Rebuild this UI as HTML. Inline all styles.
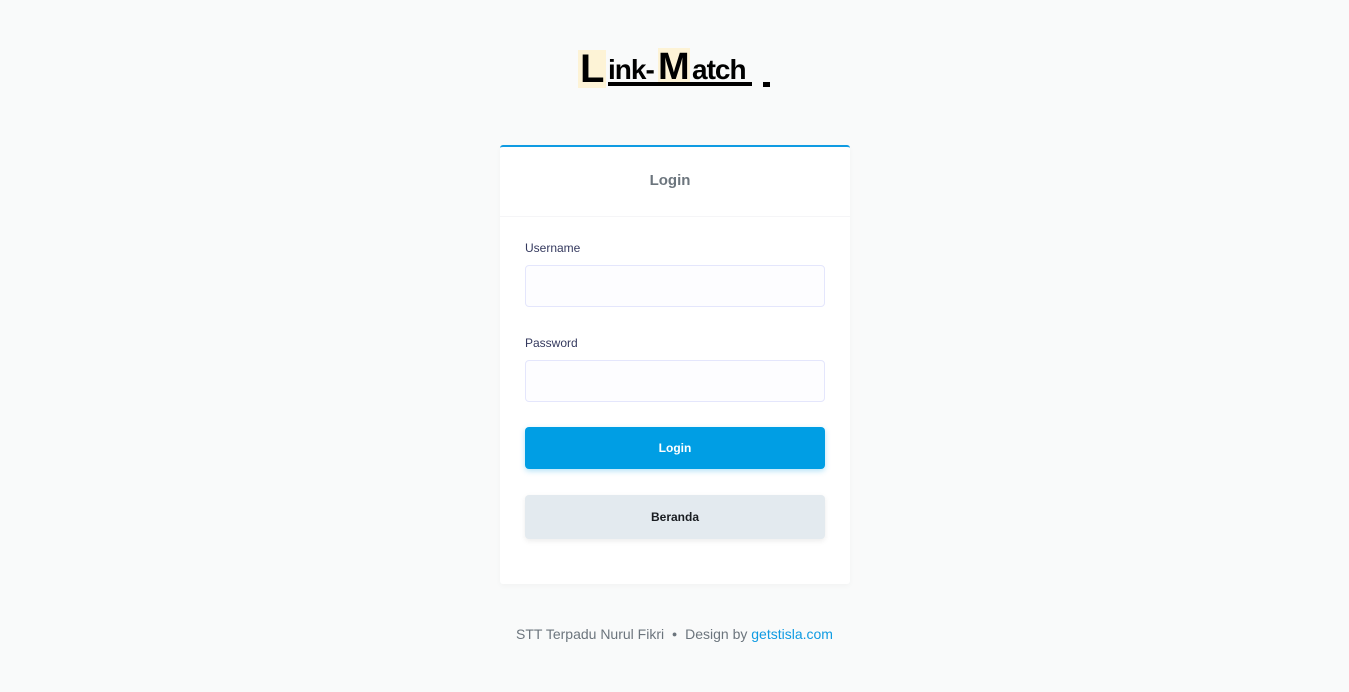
<!DOCTYPE html>
<html><head><style>
body{margin:0;background:#f9fafa;font-family:"Liberation Sans",sans-serif;width:1349px;height:692px;position:relative;overflow:hidden}
.logo{position:absolute;left:578px;top:46px;width:200px;height:50px}
.logo span{position:absolute;font-family:"Liberation Sans",sans-serif;font-weight:bold;color:#000}
.card{position:absolute;left:500px;top:145px;width:350px;height:437px;background:#fff;border-top:2px solid #0f9be2;border-radius:3px;box-shadow:0 2px 6px rgba(0,0,0,.03)}
.hd{height:69px;border-bottom:1px solid #f5f5f7;text-align:center;line-height:68px;font-size:15px;font-weight:bold;color:#6c757d;padding-right:10px}
label{position:absolute;left:25px;font-size:12px;color:#34395e}
.in{position:absolute;left:25px;width:298px;height:40px;border:1px solid #e4e6fc;background:#fdfdff;border-radius:4px}
.btn{position:absolute;left:25px;width:300px;border-radius:4px;text-align:center;font-size:12px;font-weight:bold}
.ft{position:absolute;top:626px;left:0;width:1349px;text-align:center;font-size:14px;color:#6c757d}
</style></head><body>
<div class="logo">
<span style="left:0;top:4px;font-size:40px;background:#fdf3d6;line-height:38px;padding:0 2px">L</span>
<span style="left:30px;top:10px;font-size:28px;line-height:28px;letter-spacing:-1px">ink-</span>
<span style="left:80px;top:2px;font-size:38px;line-height:38px;background:#fdf3d6">M</span>
<span style="left:114px;top:10px;font-size:28px;line-height:28px;letter-spacing:-1px">atch</span>
<div style="position:absolute;left:30px;top:36px;width:144px;height:4px;background:#000"></div>
<div style="position:absolute;left:185px;top:36px;width:7px;height:5px;background:#000"></div>
</div>
<div class="card">
<div class="hd">Login</div>
<label style="top:94px">Username</label>
<div class="in" style="top:118px"></div>
<label style="top:189px">Password</label>
<div class="in" style="top:213px"></div>
<div class="btn" style="top:280px;height:42px;line-height:42px;background:#009ee4;color:#fff;box-shadow:0 2px 6px rgba(0,158,228,.3)">Login</div>
<div class="btn" style="top:348px;height:44px;line-height:44px;background:#e3eaef;color:#191d21;box-shadow:0 2px 6px rgba(0,0,0,.08)">Beranda</div>
</div>
<div class="ft">STT Terpadu Nurul Fikri &nbsp;<span style="font-size:9px;vertical-align:2px">●</span>&nbsp; Design by <span style="color:#0f9be2">getstisla.com</span></div>
</body></html>
